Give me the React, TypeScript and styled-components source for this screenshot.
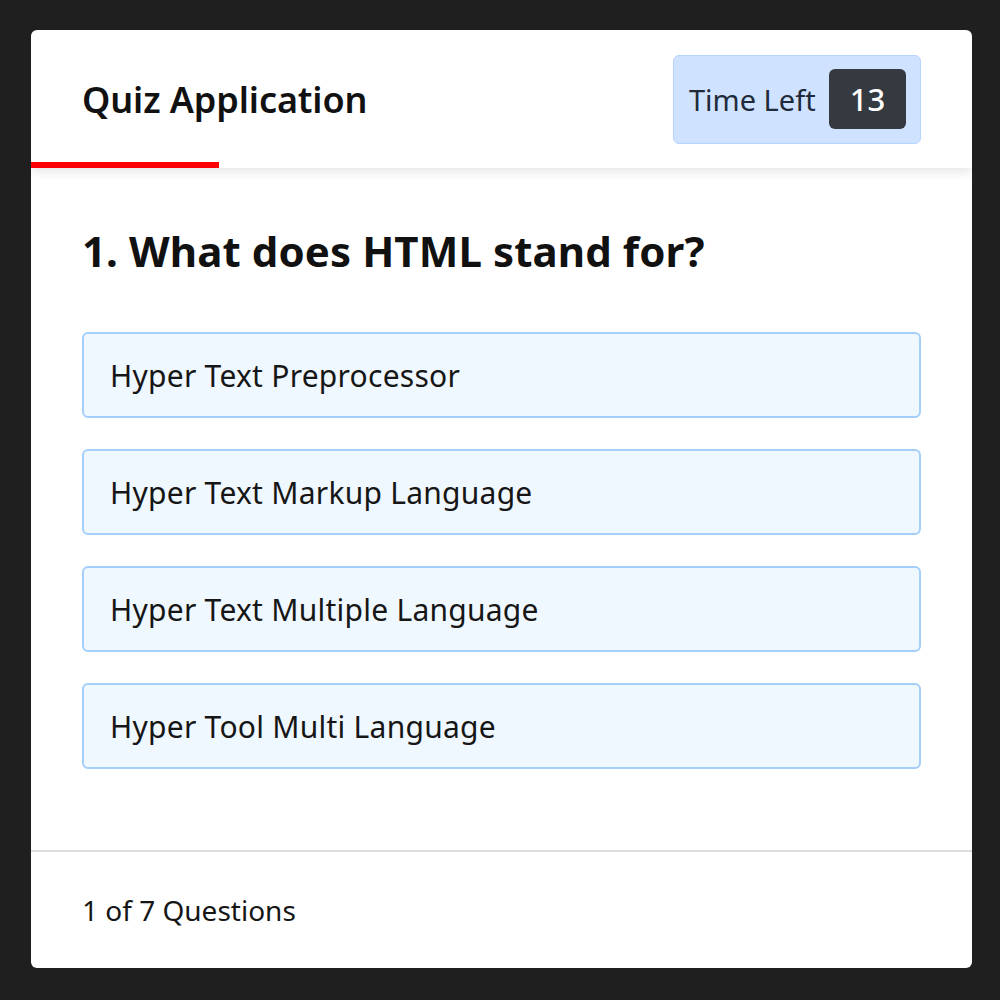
import React from 'react';
import styled, { createGlobalStyle } from 'styled-components';

const GlobalStyle = createGlobalStyle`
    html, body {
        margin: 0;
        padding: 0;
        background: #1f1f1f;
    }
    * {
        box-sizing: border-box;
    }
`

const options = [
    'Hyper Text Preprocessor',
    'Hyper Text Markup Language',
    'Hyper Text Multiple Language',
    'Hyper Tool Multi Language',
]

const App = () => {
    const progress = 20;

    return (
        <>
            <GlobalStyle />
            <Page>
                <Card>
                    <Header>
                        <HeaderRow>
                            <Title>Quiz Application</Title>
                            <TimeBox>
                                Time Left
                                <TimeBadge>13</TimeBadge>
                            </TimeBox>
                        </HeaderRow>
                        <ProgressBar style={{ width: `${progress}%` }} />
                    </Header>
                    <Body>
                        <Question>1. What does HTML stand for?</Question>
                        <OptionList>
                            {options.map(option => (
                                <Option key={option}>{option}</Option>
                            ))}
                        </OptionList>
                    </Body>
                    <Footer>1 of 7 Questions</Footer>
                </Card>
            </Page>
        </>
    )
}

const Page = styled.div`
    width: 1000px;
    height: 1000px;
    padding: 30px 28px 32px 31px;
`

const Card = styled.div`
    width: 941px;
    height: 938px;
    background: #fff;
    border-radius: 6px;
    display: flex;
    flex-direction: column;
    overflow: hidden;
    font-family: "Noto Sans", sans-serif;
    color: #111;
`

const Header = styled.div`
    position: relative;
    z-index: 1;
    height: 138px;
    display: flex;
    flex-direction: column;
    box-shadow: 0 4px 10px rgba(0, 0, 0, 0.1);
`

const HeaderRow = styled.div`
    flex: 1;
    display: flex;
    align-items: center;
    justify-content: space-between;
    padding: 6px 51px 0;
`

const Title = styled.h1`
    margin: 0;
    font-size: 36px;
    font-weight: 600;
    letter-spacing: -0.1px;
`

const TimeBox = styled.div`
    width: 248px;
    height: 89px;
    display: flex;
    align-items: center;
    justify-content: space-between;
    padding: 0 14px 0 15px;
    background: #cfe2ff;
    border: 1px solid #b6d4fe;
    border-radius: 6px;
    color: #1f2a3a;
    font-size: 29px;
`

const TimeBadge = styled.span`
    width: 77px;
    height: 60px;
    display: flex;
    align-items: center;
    justify-content: center;
    background: #343a40;
    border-radius: 6px;
    color: #fff;
    font-size: 31px;
    font-weight: 500;
`

const ProgressBar = styled.div`
    height: 6px;
    background: #f00;
`

const Body = styled.div`
    flex: 1;
    padding: 53px 51px 0;
`

const Question = styled.h2`
    margin: 0 0 51px;
    font-size: 42px;
    font-weight: 700;
    line-height: 60px;
    letter-spacing: 0.1px;
`

const OptionList = styled.div`
    display: flex;
    flex-direction: column;
    gap: 31px;
`

const Option = styled.div`
    height: 86px;
    display: flex;
    align-items: center;
    padding: 0 26px;
    background: #f0f8ff;
    border: 2px solid #a3cffa;
    border-radius: 6px;
    font-size: 30px;
    letter-spacing: 0.25px;
    color: #161616;
    cursor: pointer;
`

const Footer = styled.div`
    height: 118px;
    display: flex;
    align-items: center;
    padding: 0 51px;
    border-top: 2px solid #ddd;
    font-size: 28px;
    color: #161616;
`

export default App;
